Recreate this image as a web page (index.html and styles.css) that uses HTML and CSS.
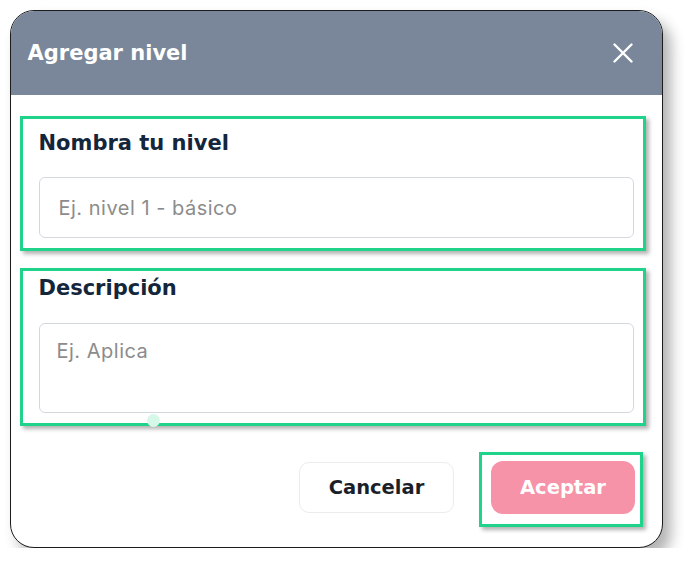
FILE: index.html
```html
<!DOCTYPE html>
<html lang="es">
<head>
    <meta charset="UTF-8">
    <title>Agregar nivel</title>
    <link rel="stylesheet" href="styles.css">
</head>
<body>
<div class="dialog">
    <div class="header">
        <h1 class="title">Agregar nivel</h1>
        <span class="close">
            <svg width="20" height="20" viewBox="0 0 20 20">
                <path d="M1.5 1.5 L18.5 18.5 M18.5 1.5 L1.5 18.5" stroke="#fff" stroke-width="2.4" stroke-linecap="round"/>
            </svg>
        </span>
    </div>
    <div class="content">
        <div class="mark field field-name">
            <label class="label">Nombra tu nivel</label>
            <input class="input" type="text" placeholder="Ej. nivel 1 - básico">
        </div>
        <div class="mark field field-desc">
            <label class="label">Descripción</label>
            <textarea class="input area" placeholder="Ej. Aplica"></textarea>
            <span class="dot"></span>
        </div>
    </div>
    <div class="footer">
        <button class="btn cancel">Cancelar</button>
        <div class="mark accept-wrap">
            <button class="btn accept">Aceptar</button>
        </div>
    </div>
</div>
</body>
</html>
```

FILE: styles.css
```css
* {
    margin: 0;
    padding: 0;
    box-sizing: border-box;
}

body {
    background-color: #fff;
    padding: 10px 0 0 10px;
    font-family: Inter, "Noto Sans", sans-serif;
}

.dialog {
    width: 653px;
    height: 538px;
    border: 1.5px solid #1c1c1c;
    border-radius: 24px;
    overflow: hidden;
    background-color: #fff;
    box-shadow: 8px 10px 14px rgba(0, 0, 0, 0.3);
    display: flex;
    flex-direction: column;
}

.header {
    height: 84px;
    background-color: #7a879a;
    display: flex;
    align-items: center;
    justify-content: space-between;
    padding: 0 29px 0 16.5px;
    flex-shrink: 0;
}

.title {
    color: #fff;
    font-family: "DejaVu Sans", Inter, sans-serif;
    font-size: 21px;
    font-weight: 700;
}

.close {
    width: 20px;
    height: 20px;
    display: block;
}

.close svg {
    display: block;
}

.content {
    padding: 21px 0 0 8.5px;
    display: flex;
    flex-direction: column;
    gap: 17px;
}

/* green highlight frames */
.mark {
    border: 3px solid #1fd38a;
    box-shadow: 3px 3px 4px rgba(0, 0, 0, 0.3);
}

.field {
    width: 626px;
    position: relative;
    display: flex;
    flex-direction: column;
    padding: 0 9px 10px 16px;
}

.field-name {
    height: 135px;
    padding-top: 9px;
}

.field-desc {
    height: 158px;
    padding-top: 2px;
}

.label {
    color: #14263b;
    font-family: "DejaVu Sans", Inter, sans-serif;
    font-size: 21px;
    font-weight: 700;
    line-height: 30px;
}

.field-name .label {
    margin-bottom: 19px;
}

.field-desc .label {
    margin-bottom: 20px;
}

.input {
    width: 100%;
    height: 61px;
    border: 1.5px solid #d3d7de;
    border-radius: 6px;
    padding: 0 19px;
    font-family: Inter, "Noto Sans", sans-serif;
    font-size: 20px;
    letter-spacing: 0.5px;
    color: #333;
    outline: none;
    background-color: #fff;
}

.area {
    height: 90px;
    padding: 15px 17px;
    resize: none;
    line-height: 24px;
}

.input::placeholder {
    color: #8c8c8c;
}

.dot {
    position: absolute;
    left: 124px;
    top: 143px;
    width: 13px;
    height: 13px;
    border-radius: 50%;
    background-color: #d6f8e8;
}

.footer {
    display: flex;
    justify-content: flex-end;
    align-items: flex-start;
    gap: 25px;
    padding: 26px 19px 0 0;
}

.btn {
    font-family: "DejaVu Sans", Inter, sans-serif;
    font-size: 19.5px;
    font-weight: 700;
    border: none;
    cursor: pointer;
}

.cancel {
    width: 155px;
    height: 51px;
    background-color: #fff;
    border: 1.5px solid #ececec;
    border-radius: 10px;
    color: #1b1f2a;
    margin-top: 10px;
}

.accept-wrap {
    width: 164px;
    height: 75px;
    padding: 6px 5px 10px 9px;
}

.accept {
    width: 144px;
    height: 53px;
    background-color: #f793a8;
    border-radius: 12px;
    color: #fff;
}
```
